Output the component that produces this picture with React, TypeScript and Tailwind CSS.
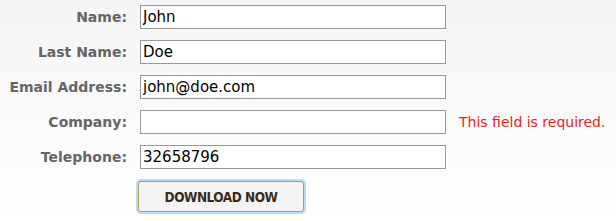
import { useState } from 'react'

const fields = [
  { label: 'Name:', value: 'John' },
  { label: 'Last Name:', value: 'Doe' },
  { label: 'Email Address:', value: 'john@doe.com' },
  { label: 'Company:', value: '', error: 'This field is required.' },
  { label: 'Telephone:', value: '32658796' },
]

export default function App() {
  const [values, setValues] = useState(fields.map((f) => f.value))

  return (
    <main className="w-[616px] h-[221px] bg-gradient-to-b from-[#f5f5f5] to-white pt-[5px] font-['Verdana','DejaVu_Sans',sans-serif]">
      <form className="flex flex-col gap-[11px]" onSubmit={(e) => e.preventDefault()}>
        {fields.map((f, i) => (
          <div key={f.label} className="flex items-center h-[24px]">
            <label className="w-[127px] text-right text-[14px] font-bold text-[#666] whitespace-nowrap">
              {f.label}
            </label>
            <input
              value={values[i]}
              onChange={(e) => setValues(values.map((v, j) => (j === i ? e.target.value : v)))}
              className="ml-[13px] w-[306px] h-[24px] border border-[#999] bg-white px-[2px] text-[15px] text-black outline-none"
            />
            {f.error && <span className="ml-[13px] text-[14px] text-[#e8241c] whitespace-nowrap">{f.error}</span>}
          </div>
        ))}
        <div className="pl-[138px] pt-[1px]">
          <button
            type="submit"
            className="w-[166px] h-[31px] rounded-[3px] border border-[#b59a5a] bg-[#f4f4f4] ring-2 ring-[#b9dcf8] pt-[2px] text-[13.5px] font-bold tracking-[-0.5px] text-[#3a2a1a] font-['DejaVu_Sans_Condensed','DejaVu_Sans',sans-serif]"
          >
            DOWNLOAD NOW
          </button>
        </div>
      </form>
    </main>
  )
}
